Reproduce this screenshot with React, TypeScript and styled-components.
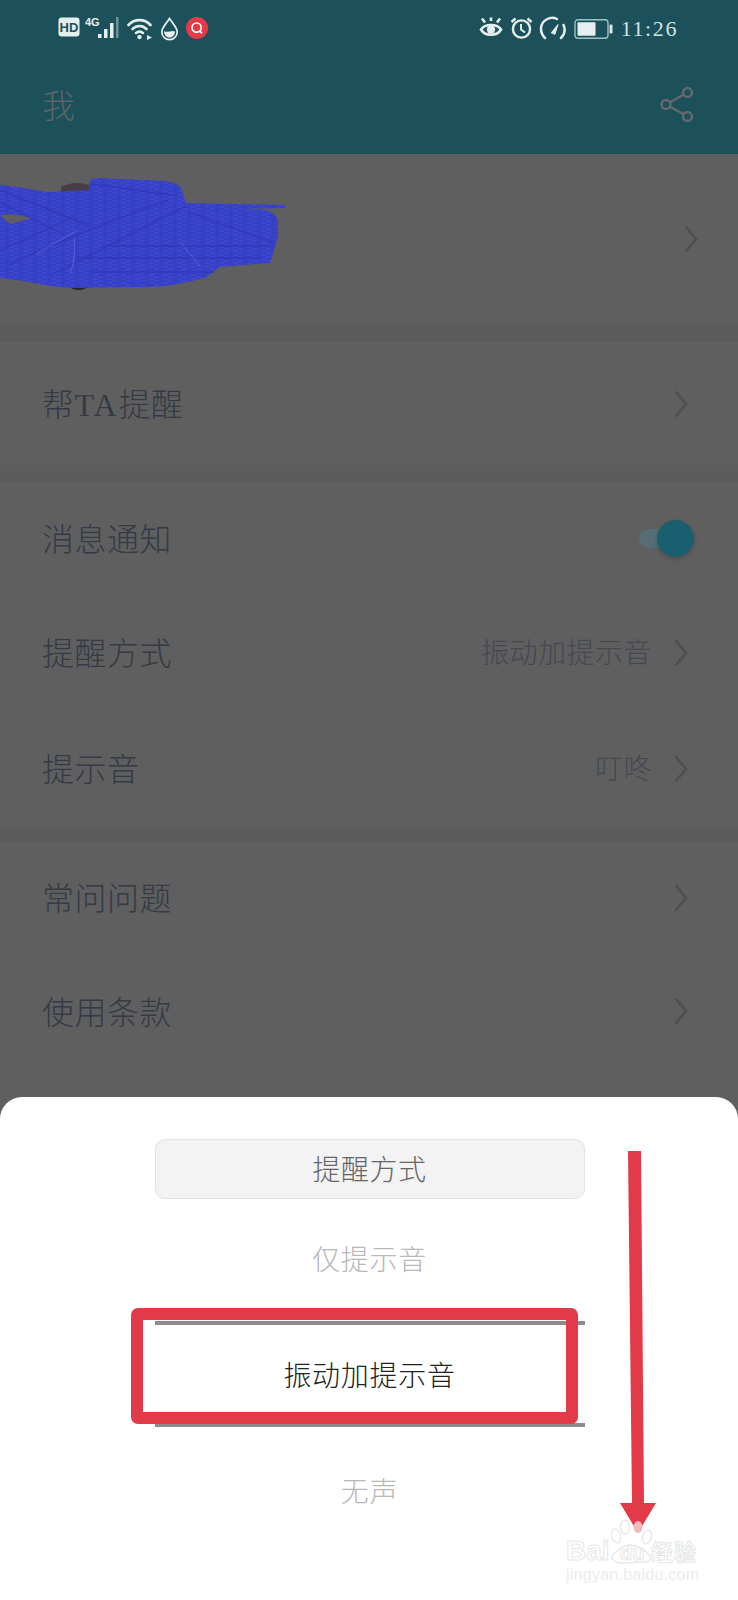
import React from 'react';
import styled, { createGlobalStyle } from 'styled-components';

const CJK = `"Liberation Serif", "Noto Sans CJK SC", serif`;

const GlobalStyle = createGlobalStyle`
  html, body {
    margin: 0;
    padding: 0;
    background: #5f5f5f;
  }
  * {
    box-sizing: border-box;
  }
`;

const Page = styled.div`
  position: relative;
  width: 738px;
  height: 1600px;
  overflow: hidden;
  background: #5f5f5f;
  font-family: ${CJK};
  font-weight: 300;
`;

const Header = styled.header`
  height: 154px;
  background: #1c505a;
  display: flex;
  flex-direction: column;
`;

const StatusBar = styled.div`
  height: 56px;
  padding: 17px 60px 0 58px;
  display: flex;
  justify-content: space-between;
  align-items: flex-start;
`;

const StatusGroup = styled.div`
  display: flex;
  align-items: flex-start;
`;

const Clock = styled.span`
  margin-left: 8px;
  margin-top: 1px;
  font-family: "Liberation Serif", serif;
  font-size: 22px;
  line-height: 22px;
  letter-spacing: 1.6px;
  color: #cfe2e2;
`;

const AppBar = styled.div`
  flex: 1;
  padding: 0 44px 2px 42px;
  display: flex;
  justify-content: space-between;
  align-items: center;
  color: #58656a;
  font-size: 33px;
`;

const Band = styled.div`
  height: ${(p: { $h: number }) => p.$h}px;
  background: #5c5c5c;
  border-bottom: 1px solid #5a5a5a;
`;

const ProfileRow = styled.div`
  height: 169px;
  padding-right: 40px;
  display: flex;
  align-items: center;
  justify-content: space-between;
`;

const Row = styled.div<{ $h: number; $line?: boolean }>`
  height: ${(p) => p.$h}px;
  padding: 3px 50px 0 42px;
  display: flex;
  align-items: center;
  border-bottom: ${(p) => (p.$line ? '1px solid #5b5b5b' : 'none')};
`;

const RowLabel = styled.span`
  flex: 1;
  font-size: 32px;
  line-height: 40px;
  letter-spacing: 0.5px;
  color: #343b46;
`;

const Latin = styled.span`
  letter-spacing: 2px;
`;

const RowValue = styled.span`
  margin-right: 22px;
  font-size: 28px;
  line-height: 36px;
  letter-spacing: 0.5px;
  color: #444852;
`;

const RowChevron = styled.span`
  display: flex;
  margin-top: -3px;
`;

const Toggle = styled.div`
  position: relative;
  width: 47px;
  height: 19px;
  margin-right: 2px;
  margin-top: -3px;
  border-radius: 10px;
  background: #566d75;
`;

const Knob = styled.div`
  position: absolute;
  top: -9px;
  right: -8px;
  width: 37px;
  height: 37px;
  border-radius: 50%;
  background: #1a5f6f;
  box-shadow: 0 2px 5px rgba(0, 0, 0, 0.2);
`;

const Sheet = styled.div`
  position: absolute;
  left: 0;
  right: 0;
  bottom: 0;
  height: 503px;
  padding-top: 42px;
  background: #fff;
  border-radius: 22px 22px 0 0;
  display: flex;
  flex-direction: column;
  align-items: center;
`;

const Picker = styled.div`
  width: 430px;
  margin-right: -1px;
  display: flex;
  flex-direction: column;
`;

const SheetTitle = styled.div`
  height: 60px;
  display: flex;
  align-items: center;
  justify-content: center;
  background: #f3f3f3;
  border: 1px solid #e2e2e2;
  border-radius: 10px;
  padding-bottom: 2px;
  font-size: 28px;
  letter-spacing: 0.5px;
  color: #666;
`;

const Option = styled.div<{ $h: number; $selected?: boolean }>`
  height: ${(p) => p.$h}px;
  display: flex;
  align-items: center;
  justify-content: center;
  padding-bottom: ${(p) => (p.$selected ? 0 : 4)}px;
  font-size: 28px;
  letter-spacing: 0.7px;
  color: ${(p) => (p.$selected ? '#222' : '#b8b8b8')};
  border-top: ${(p) => (p.$selected ? '4px solid #8f8a8c' : 'none')};
  border-bottom: ${(p) => (p.$selected ? '4px solid #8f8a8c' : 'none')};
`;

const Highlight = styled.div`
  position: absolute;
  left: 131px;
  top: 1308px;
  width: 447px;
  height: 116px;
  border: 12px solid #e23a48;
  border-radius: 7px;
`;

const Overlay = styled.svg`
  position: absolute;
  left: 0;
  top: 0;
`;

const Watermark = styled.div`
  position: absolute;
  left: 566px;
  top: 1534px;
  width: 134px;
  height: 50px;
  display: flex;
  flex-direction: column;
`;

const MarkLogo = styled.div`
  height: 32px;
  display: flex;
  align-items: baseline;
  font-family: "Liberation Sans", sans-serif;
  font-weight: 700;
  color: #fff;
  -webkit-text-stroke: 1px #e6e6e6;
  white-space: nowrap;
`;

const MarkBai = styled.span`
  width: 54px;
  font-size: 28px;
  line-height: 32px;
`;

const MarkDu = styled.span`
  width: 31px;
  font-size: 20px;
  line-height: 32px;
`;

const MarkWords = styled.span`
  font-family: "Noto Sans CJK SC", sans-serif;
  font-size: 22px;
  line-height: 32px;
  letter-spacing: 1px;
`;

const MarkUrl = styled.div`
  font-family: "Liberation Sans", sans-serif;
  font-size: 16px;
  line-height: 18px;
  letter-spacing: 0.25px;
  color: #ececec;
  white-space: nowrap;
`;

const Chevron = ({ color = '#4f4f4f' }: { color?: string }) => (
  <svg width="14" height="28" viewBox="0 0 14 28" fill="none">
    <path d="M1.5 1.5 L12 14 L1.5 26.5" stroke={color} strokeWidth="2.6" />
  </svg>
);

const HdIcon = () => (
  <svg width="22" height="20" viewBox="0 0 22 20" style={{ marginRight: 5 }}>
    <rect x="0.5" y="0.5" width="21" height="19" rx="3" fill="#e6efef" />
    <text x="11" y="15" fontSize="13" fontWeight="700" textAnchor="middle" fontFamily="Liberation Sans, sans-serif" fill="#1c505a">
      HD
    </text>
  </svg>
);

const SignalIcon = () => (
  <svg width="36" height="24" viewBox="0 0 36 24" style={{ marginRight: 6, marginTop: -1 }}>
    <text x="0" y="10" fontSize="11" fontWeight="700" fontFamily="Liberation Sans, sans-serif" fill="#e6efef">
      4G
    </text>
    <rect x="13" y="18" width="3.5" height="4" fill="#e6efef" />
    <rect x="19" y="13" width="3.5" height="9" fill="#e6efef" />
    <rect x="25" y="7" width="3.5" height="15" fill="#e6efef" />
    <rect x="31" y="1" width="2.5" height="21" fill="#6d9299" />
  </svg>
);

const WifiIcon = () => (
  <svg width="26" height="24" viewBox="0 0 26 24" fill="none" stroke="#e6efef" strokeWidth="2.6" strokeLinecap="round" style={{ marginRight: 7 }}>
    <path d="M1.5 8 C7.5 1.5 17.5 1.5 23.5 8" />
    <path d="M5.5 12 C9.5 8 15.5 8 19.5 12" />
    <path d="M9 16 C11 14.5 14 14.5 16 16" />
    <circle cx="12.5" cy="20" r="2.2" fill="#e6efef" stroke="none" />
    <path d="M20 18 L25 20.5 L20 23 Z" fill="#e6efef" stroke="none" />
  </svg>
);

const DropIcon = () => (
  <svg width="19" height="24" viewBox="0 0 19 24" style={{ marginRight: 7 }}>
    <path d="M9.5 1.5 C6 7 1.8 10.5 1.8 15 A7.7 7.7 0 0 0 17.2 15 C17.2 10.5 13 7 9.5 1.5 Z" fill="none" stroke="#e6efef" strokeWidth="1.7" />
    <path d="M4 14 C7 16.5 12 12.5 15 14.5 C15 18 12.5 20.5 9.5 20.5 C6.5 20.5 4 18 4 14 Z" fill="#e6efef" />
  </svg>
);

const SearchBadge = () => (
  <svg width="22" height="22" viewBox="0 0 22 22">
    <circle cx="11" cy="11" r="11" fill="#e63a48" />
    <circle cx="10.6" cy="10.6" r="4.6" fill="none" stroke="#fff" strokeWidth="1.7" />
    <path d="M13.8 14 L16 16.4" stroke="#fff" strokeWidth="1.7" />
  </svg>
);

const EyeIcon = () => (
  <svg width="24" height="22" viewBox="0 0 24 22" fill="none" stroke="#e6efef" strokeWidth="2.6" style={{ marginRight: 7, marginLeft: 1 }}>
    <path d="M2 12.5 C6 6.5 18 6.5 22 12.5 C18 19.5 6 19.5 2 12.5 Z" />
    <circle cx="12" cy="12.5" r="4.2" fill="#e6efef" stroke="none" />
    <path d="M3 1.5 L6 5.5 M21 1.5 L18 5.5 M12 0.5 V4" />
  </svg>
);

const AlarmIcon = () => (
  <svg width="23" height="22" viewBox="0 0 23 22" fill="none" stroke="#e6efef" strokeWidth="2.4" style={{ marginRight: 6 }}>
    <circle cx="11.5" cy="12" r="8.6" />
    <path d="M11 7 V12.5 L15 15.5" strokeWidth="1.9" />
    <path d="M1.5 5 L5.5 1.5 M21.5 5 L17.5 1.5" />
  </svg>
);

const GaugeIcon = () => (
  <svg width="27" height="24" viewBox="0 0 27 24" fill="none" stroke="#e6efef" strokeWidth="2.5" strokeLinecap="round" style={{ marginRight: 8, marginTop: -1 }}>
    <path d="M6 22 C0 16 1 7 7.5 3.5 C11 1.5 15 1.5 18 3" />
    <path d="M24.5 9 C26.5 13.5 25.5 18.5 22 22" />
    <path d="M12.5 16.5 L19 8.5 L16 18 Z" fill="#e6efef" strokeWidth="1" />
  </svg>
);

const BatteryIcon = () => (
  <svg width="39" height="20" viewBox="0 0 39 20" style={{ marginTop: 2 }}>
    <rect x="1" y="0.8" width="33" height="18.4" rx="3" fill="none" stroke="#9fc0c4" strokeWidth="1.4" />
    <rect x="3.5" y="3.2" width="18" height="13.6" rx="1" fill="#e6efef" />
    <rect x="35.5" y="5.5" width="3" height="9" rx="1" fill="#d8e6e6" />
  </svg>
);

const ShareIcon = () => (
  <svg width="34" height="37" viewBox="0 0 34 37" fill="none" stroke="#626a6e" strokeWidth="2.4">
    <circle cx="27.5" cy="6.5" r="4.5" />
    <circle cx="6" cy="18.5" r="4.5" />
    <circle cx="27.5" cy="30.5" r="4.5" />
    <path d="M23.6 8.7 L9.9 16.3 M9.9 20.7 L23.6 28.3" />
  </svg>
);

// the blue scribble hiding the avatar and the name
const Scribble = () => (
  <svg width="290" height="169" viewBox="0 0 290 169">
    <defs>
      <pattern id="strokes" width="14" height="4" patternUnits="userSpaceOnUse">
        <rect width="14" height="4" fill="#3c46d0" />
        <path d="M0 1 H9 M5 3 H14" stroke="#2d36b4" strokeWidth="0.8" />
      </pattern>
    </defs>
    <path d="M61 33 Q74 26 89 31 L89 38 L61 38 Z" fill="#4a3c46" />
    <path d="M68 132 Q78 140 90 132 Z" fill="#2e2228" />
    <path
      fill="url(#strokes)"
      d="M0 31 Q20 33 47 38 L89 36 L89 30 Q90 24 98 24 L165 27 Q178 29 181 34 L186 49 L285 51 L285 54 L240 55 L266 56 Q276 60 278 66 L278 83 L270 109 L219 113 L207 123 Q170 134 141 133 L70 134 Q44 132 24 127 L0 124 Z"
    />
    <path d="M0 61 L10 70 L33 64 L12 60 Z" fill="#5f5f5f" />
    <g stroke="#2d36b4" strokeWidth="1.4" fill="none" opacity="0.75">
      <path d="M0 36 L90 72 M0 48 L70 84 M92 30 L178 42 M188 58 L272 88" />
      <path d="M10 110 Q80 78 168 46 M50 122 Q110 90 186 52 M0 96 Q40 80 74 62" />
      <path d="M110 92 H270 M76 104 H262 M90 118 H214" />
    </g>
    <g stroke="#6a72ea" strokeWidth="1" fill="none" opacity="0.6">
      <path d="M74 84 Q76 106 70 120 M180 88 L200 112 M36 100 L78 76" />
    </g>
  </svg>
);

const Arrow = () => (
  <Overlay width="738" height="1600" viewBox="0 0 738 1600">
    <path d="M628 1151 H641 L644 1503 H656 L638 1533 L620 1503 H632 Z" fill="#e23a48" />
    <g fill="#fff" stroke="#e8e8e8" strokeWidth="1.4">
      <ellipse cx="616" cy="1536" rx="4.5" ry="7" transform="rotate(-15 616 1536)" />
      <ellipse cx="625" cy="1527" rx="4.5" ry="7" />
      <ellipse cx="647" cy="1537" rx="4.5" ry="7" transform="rotate(15 647 1537)" />
      <path d="M612 1556 Q630 1534 650 1556 Q652 1564 636 1562 Q612 1566 612 1556 Z" />
    </g>
    <ellipse cx="638" cy="1527" rx="4.5" ry="6" fill="#f4b8bd" />
  </Overlay>
);

export default function App() {
  return (
    <Page>
      <GlobalStyle />
      <Header>
        <StatusBar>
          <StatusGroup>
            <HdIcon />
            <SignalIcon />
            <WifiIcon />
            <DropIcon />
            <SearchBadge />
          </StatusGroup>
          <StatusGroup>
            <EyeIcon />
            <AlarmIcon />
            <GaugeIcon />
            <BatteryIcon />
            <Clock>11:26</Clock>
          </StatusGroup>
        </StatusBar>
        <AppBar>
          <span>我</span>
          <ShareIcon />
        </AppBar>
      </Header>

      <ProfileRow>
        <Scribble />
        <Chevron />
      </ProfileRow>
      <Band $h={19} />

      <Row $h={123}>
        <RowLabel>
          帮<Latin>TA</Latin>提醒
        </RowLabel>
        <RowChevron>
          <Chevron />
        </RowChevron>
      </Row>
      <Band $h={17} />

      <Row $h={114} $line>
        <RowLabel>消息通知</RowLabel>
        <Toggle>
          <Knob />
        </Toggle>
      </Row>
      <Row $h={114} $line>
        <RowLabel>提醒方式</RowLabel>
        <RowValue>振动加提示音</RowValue>
        <RowChevron>
          <Chevron />
        </RowChevron>
      </Row>
      <Row $h={117}>
        <RowLabel>提示音</RowLabel>
        <RowValue>叮咚</RowValue>
        <RowChevron>
          <Chevron />
        </RowChevron>
      </Row>
      <Band $h={14} />

      <Row $h={113}>
        <RowLabel>常问问题</RowLabel>
        <RowChevron>
          <Chevron />
        </RowChevron>
      </Row>
      <Row $h={115} $line>
        <RowLabel>使用条款</RowLabel>
        <RowChevron>
          <Chevron />
        </RowChevron>
      </Row>

      <Sheet>
        <Picker>
          <SheetTitle>提醒方式</SheetTitle>
          <Option $h={122}>仅提示音</Option>
          <Option $h={106} $selected>
            振动加提示音
          </Option>
          <Option $h={130}>无声</Option>
        </Picker>
      </Sheet>

      <Arrow />
      <Watermark>
        <MarkLogo>
          <MarkBai>Bai</MarkBai>
          <MarkDu>du</MarkDu>
          <MarkWords>经验</MarkWords>
        </MarkLogo>
        <MarkUrl>jingyan.baidu.com</MarkUrl>
      </Watermark>
      <Highlight />
    </Page>
  );
}
